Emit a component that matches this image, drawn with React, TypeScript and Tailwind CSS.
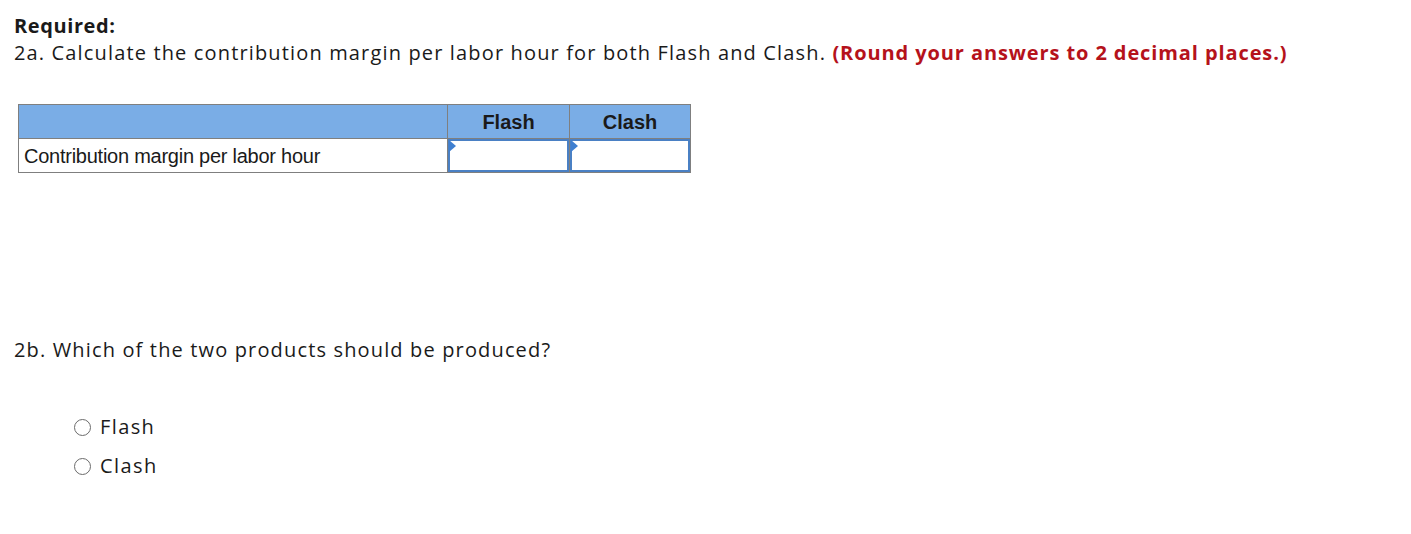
export default function App() {
  const radios = ["Flash", "Clash"];
  return (
    <div className="min-h-[534px] w-full bg-white pl-[14px] pt-[12px] text-[#1a1a1a] font-['Open_Sans',sans-serif] text-[20px] tracking-[1.15px]">
      <p className="font-bold leading-[27px] tracking-[0.6px]">Required:</p>
      <p className="leading-[27px]">
        2a. Calculate the contribution margin per labor hour for both Flash and Clash.{" "}
        <span className="font-bold text-[#b5121b] tracking-[0.9px]">(Round your answers to 2 decimal places.)</span>
      </p>

      <table className="mt-[38px] ml-[4px] border-collapse font-['Liberation_Sans',Arial,sans-serif] text-[20px] tracking-normal">
        <thead>
          <tr className="h-[34px] bg-[#7aade6]">
            <th className="w-[429px] border border-[#7f7f7f]"></th>
            <th className="w-[122px] border border-[#7f7f7f] font-bold text-[#1a1a1a]">Flash</th>
            <th className="w-[121px] border border-[#7f7f7f] font-bold text-[#1a1a1a]">Clash</th>
          </tr>
        </thead>
        <tbody>
          <tr className="h-[34px]">
            <td className="border border-[#7f7f7f] pl-[5px] text-left text-[#1a1a1a] tracking-[-0.25px]">
              Contribution margin per labor hour
            </td>
            {[0, 1].map((i) => (
              <td key={i} className="relative border border-[#7f7f7f] p-0">
                <div className="h-[33px] w-full border-2 border-[#4a80c4] bg-white"></div>
                <span className="absolute left-[1px] top-[1px] h-0 w-0 border-y-[6px] border-l-[7px] border-y-transparent border-l-[#3f7fd0]"></span>
              </td>
            ))}
          </tr>
        </tbody>
      </table>

      <p className="mt-[163px] leading-[28px]">2b. Which of the two products should be produced?</p>

      <div className="mt-[49px] ml-[60px] flex flex-col gap-[11px] tracking-[1.4px]">
        {radios.map((r) => (
          <label key={r} className="flex h-[28px] items-center gap-[9px]">
            <span className="h-[17px] w-[17px] rounded-full border border-[#6b6b6b] bg-white"></span>
            <span>{r}</span>
          </label>
        ))}
      </div>
    </div>
  );
}
